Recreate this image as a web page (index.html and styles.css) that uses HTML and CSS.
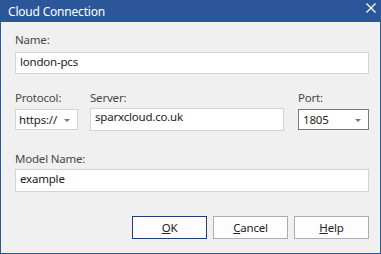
FILE: index.html
```html
<!DOCTYPE html>
<html lang="en">
<head>
    <meta charset="UTF-8">
    <title>Cloud Connection</title>
    <link rel="stylesheet" href="styles.css">
</head>
<body>

    <div class="dialog">
        <!-- Title bar -->
        <div class="titlebar">
            <span class="title">Cloud Connection</span>
            <svg class="close" width="10" height="10" viewBox="0 0 10 10">
                <path d="M0.5 0.5 L9.5 9.5 M9.5 0.5 L0.5 9.5" stroke="#fff" stroke-width="1.3" fill="none"/>
            </svg>
        </div>

        <!-- Body -->
        <div class="content">
            <div class="field name-field">
                <label>Name:</label>
                <div class="box">london-pcs</div>
            </div>

            <div class="row">
                <div class="field protocol">
                    <label>Protocol:</label>
                    <div class="box select">
                        <span>https://</span>
                        <span class="arrow"></span>
                    </div>
                </div>
                <div class="field server">
                    <label>Server:</label>
                    <div class="box server-box">sparxcloud.co.uk</div>
                </div>
                <div class="field port">
                    <label>Port:</label>
                    <div class="box select port-box">
                        <span>1805</span>
                        <span class="arrow"></span>
                    </div>
                </div>
            </div>

            <div class="field model-field">
                <label>Model Name:</label>
                <div class="box">example</div>
            </div>

            <div class="buttons">
                <button class="btn default"><u>O</u>K</button>
                <button class="btn"><u>C</u>ancel</button>
                <button class="btn"><u>H</u>elp</button>
            </div>
        </div>
    </div>

</body>
</html>
```

FILE: styles.css
```css
/* General Styles */
* {
    margin: 0;
    padding: 0;
    box-sizing: border-box;
}

body {
    font-family: "Noto Sans", "Open Sans", sans-serif;
    font-size: 11.5px;
    letter-spacing: -0.2px;
    background: #f0f0f0;
}

.dialog {
    width: 381px;
    height: 254px;
    background: #f0f0f0;
    border: 1px solid #2b579a;
    border-top: none;
    display: flex;
    flex-direction: column;
}

/* Title bar */
.titlebar {
    height: 22px;
    background: #2b579a;
    display: flex;
    align-items: center;
    justify-content: space-between;
    padding: 0 4px 0 8px;
    margin: 0 -1px;
}

.title {
    color: #fff;
    font-size: 12px;
    line-height: 16px;
    margin-top: 2px;
}

.close {
    margin-top: -6px;
    margin-right: 1px;
}

/* Content */
.content {
    padding: 10px 11px 0 14px;
}

.field label {
    display: block;
    color: #474747;
    line-height: 16px;
    margin-bottom: 4px;
}

.box {
    height: 22px;
    background: #fff;
    border: 1px solid #d4d4d4;
    color: #222;
    padding: 1px 0 0 4px;
    line-height: 16px;
}

.row {
    display: flex;
    margin-top: 16px;
}

.row .field label {
    margin-bottom: 3px;
}

.protocol {
    width: 63px;
}

.server {
    width: 194px;
    margin-left: 12px;
}

.port {
    width: 71px;
    margin-left: 14px;
}

.server-box {
    margin-top: -1px;
    height: 23px;
    padding-top: 0;
}

.select {
    display: flex;
    align-items: center;
    justify-content: space-between;
    padding: 0 7px 0 3px;
    height: 21px;
}

.port-box {
    border-color: #7a7a7a;
    height: 21px;
    padding-left: 4px;
}

.arrow {
    width: 0;
    height: 0;
    border-left: 3px solid transparent;
    border-right: 3px solid transparent;
    border-top: 3px solid #777;
    margin-top: 1px;
}

.model-field {
    margin-top: 20px;
}

.model-field label {
    margin-bottom: 2px;
}

.model-field .box {
    height: 23px;
}

/* Buttons */
.buttons {
    display: flex;
    justify-content: flex-end;
    gap: 6px;
    margin-top: 24px;
}

.btn {
    width: 75px;
    height: 23px;
    background: #fdfdfd;
    border: 1px solid #adadad;
    font-family: inherit;
    font-size: 11.5px;
    letter-spacing: -0.2px;
    color: #222;
}

.btn.default {
    border-color: #1e3f78;
}
```
